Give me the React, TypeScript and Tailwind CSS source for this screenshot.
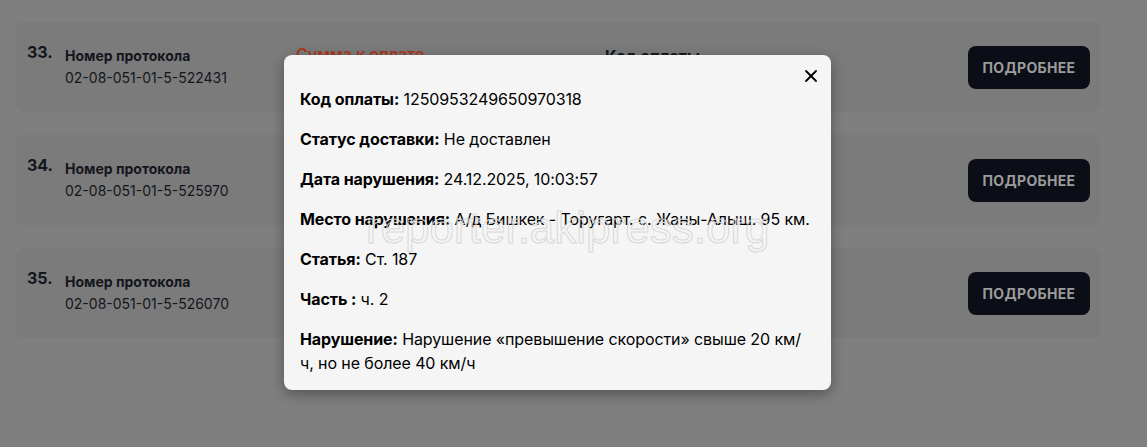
import React from "react";
import { X } from "lucide-react";

type Row = { n: number; protocol: string };

const rows: Row[] = [
  { n: 33, protocol: "02-08-051-01-5-522431" },
  { n: 34, protocol: "02-08-051-01-5-525970" },
  { n: 35, protocol: "02-08-051-01-5-526070" },
];

const details: [string, string][] = [
  ["Код оплаты:", "1250953249650970318"],
  ["Статус доставки:", "Не доставлен"],
  ["Дата нарушения:", "24.12.2025, 10:03:57"],
  ["Место нарушения:", "А/д Бишкек - Торугарт. с. Жаны-Алыш. 95 км."],
  ["Статья:", "Ст. 187"],
  ["Часть :", "ч. 2"],
  ["Нарушение:", "Нарушение «превышение скорости» свыше 20 км/ч, но не более 40 км/ч"],
];

const ProtocolCard: React.FC<{ row: Row; first: boolean }> = ({ row, first }) => (
  <li className="flex items-center h-[90px] bg-[#7b7b7b] rounded-lg pl-[11px] pr-[10px]">
    <div className="flex self-start pt-[18px] flex-1">
      <div className="w-[38px] text-[16px] font-bold text-[#14161d] leading-6">{row.n}.</div>
      <div className="w-[231px] pt-[4px]">
        <div className="text-[14px] font-bold text-[#14161d] leading-6">Номер протокола</div>
        <div className="text-[14px] text-[#14161d] leading-5">{row.protocol}</div>
      </div>
      {first && (
        <>
          <div className="w-[309px] text-[16px] font-semibold text-[#a83a1f] leading-6 pt-[2px]">Сумма к оплате</div>
          <div className="text-[16px] font-bold text-[#14161d] leading-6 pt-[4px]">Код оплаты</div>
        </>
      )}
    </div>
    <button className="w-[122px] h-[43px] rounded-lg bg-[#0b0e17] text-[#9c9c9c] text-[14px] font-bold tracking-wide uppercase">
      Подробнее
    </button>
  </li>
);

export default function App() {
  return (
    <div
      className="relative w-[1147px] h-[447px] bg-[#7f7f7f] overflow-hidden"
      style={{ fontFamily: "Inter, 'Noto Sans', sans-serif" }}
    >
      <ul className="flex flex-col gap-[23px] ml-4 pt-[22px] w-[1084px]">
        {rows.map((r, i) => (
          <ProtocolCard key={r.n} row={r} first={i === 0} />
        ))}
      </ul>

      <div className="absolute left-[284px] top-[55px] w-[547px] h-[335px] bg-[#f5f5f5] rounded-lg shadow-[0_4px_14px_rgba(0,0,0,0.35)] pl-4 pr-[18px] pt-[32px] pb-4 text-black">
        <button className="absolute right-[6px] top-[7px] p-1 text-black">
          <X size={20} strokeWidth={2.2} />
        </button>
        <div className="flex flex-col gap-4 text-[16px] leading-6 tracking-[-0.1px]">
          {details.map(([k, v]) => (
            <p key={k}>
              <span className="font-bold">{k}</span> {v}
            </p>
          ))}
        </div>
      </div>

      <div
        className="absolute left-[366px] top-[203px] text-[44px] leading-[50px] text-transparent [-webkit-text-stroke:1px_#d8d8d8] pointer-events-none select-none"
        style={{ fontFamily: "'Liberation Sans', sans-serif" }}
      >
        reporter.akipress.org
      </div>
    </div>
  );
}
